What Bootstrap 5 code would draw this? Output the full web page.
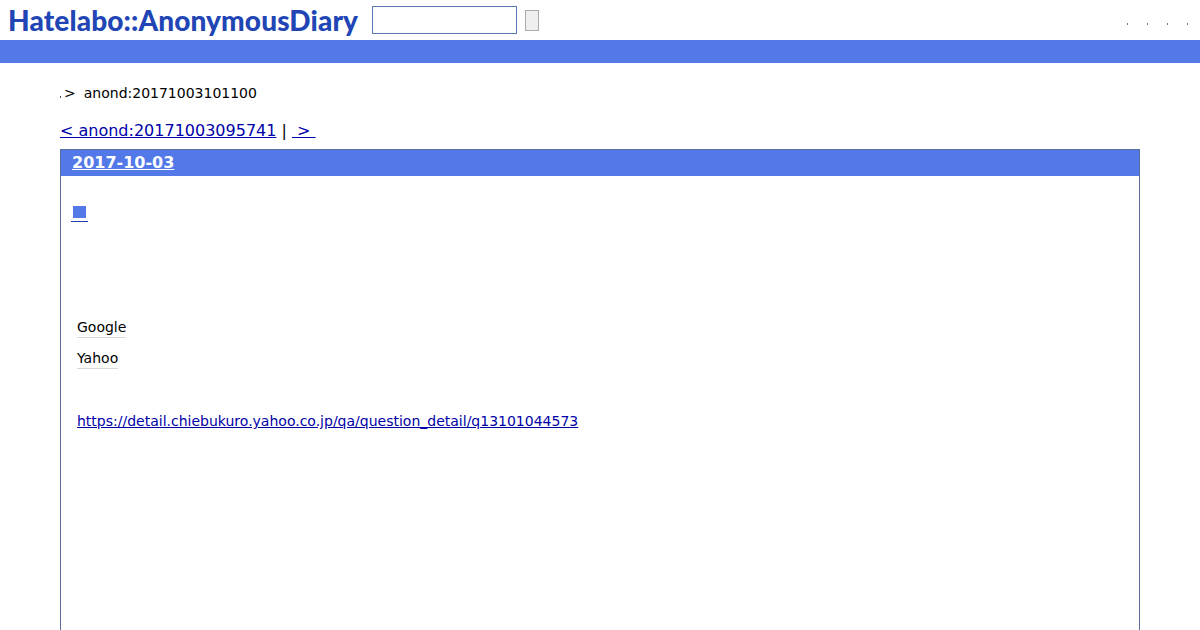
<!DOCTYPE html>
<html lang="ja">
<head>
<meta charset="utf-8">
<title>anond:20171003101100</title>
<link href="https://cdn.jsdelivr.net/npm/bootstrap@5.3.0/dist/css/bootstrap.min.css" rel="stylesheet">
<style>
html,body{height:630px;overflow:hidden}
body{font-family:"DejaVu Sans",sans-serif;font-size:14px;color:#000;background:#fff;line-height:normal}
a{color:#0000a8}
.top-strip{height:40px;padding-left:8px;padding-right:12px}
.site-logo{font-family:"Lato",sans-serif;font-weight:900;font-size:28px;color:#2145b5;line-height:40px;text-decoration:none;letter-spacing:.13px;white-space:nowrap}
.search-box{width:145px;height:28px;border:1px solid #5a78b4;background:#fff;margin-left:14px;padding:0}
.search-go{width:14px;height:21px;border:1px solid #aaa;background:#efefef;margin-left:8px;padding:0}
.tiny-links{gap:19px;margin-top:8px}
.tiny-links span{width:1px;height:2px;background:#777}
.blue-bar{height:23px;background:#5279e7}
.page-main{padding:0 60px}
.crumb{padding-top:22px;height:58px;line-height:17px;color:#000}
.crumb-dot{width:1px;height:2px;background:#555;margin-top:11px;margin-right:3px}
.crumb-gt{margin-right:8px}
.pager{font-size:16px;line-height:19px;height:19px}
.day-box{border:1px solid #5a6f9c;border-bottom:0;margin-top:9px;height:500px}
.day-head{background:#5279e7;height:26px;padding-left:11px;font-size:16px;font-weight:700;line-height:25px}
.day-head a{color:#fff}
.day-body{padding:0 16px}
.square-link{display:block;width:15px;height:15px;margin:29px 0 0 -6px;padding:1px 0 0 2px;border-bottom:1px solid #1c3fb0;box-sizing:content-box}
.square-glyph{display:block;width:13px;height:12px;background:#5279e7}
.tag-word{display:inline-block;line-height:17px;border-bottom:1px solid #d8d8d8;padding-bottom:1px}
.word-a{margin-top:97px}
.word-b{margin-top:12px}
.ext-url{margin-top:44px;line-height:17px}
</style>
</head>
<body>
<header class="top-strip d-flex align-items-center">
  <a class="site-logo" href="#">Hatelabo::AnonymousDiary</a>
  <input class="search-box" type="text" aria-label="search">
  <button class="search-go" type="button" aria-label="go"></button>
  <div class="tiny-links d-flex ms-auto"><span></span><span></span><span></span><span></span></div>
</header>
<div class="blue-bar"></div>
<main class="page-main">
  <div class="crumb d-flex align-items-start">
    <span class="crumb-dot"></span><span class="crumb-gt">&gt;</span><span>anond:20171003101100</span>
  </div>
  <div class="pager"><a href="#">&lt; anond:20171003095741</a> | <a href="#">&nbsp;&gt;&nbsp;</a></div>
  <section class="day-box">
    <div class="day-head"><a href="#">2017-10-03</a></div>
    <div class="day-body">
      <a class="square-link" href="#" aria-label="entry"><span class="square-glyph"></span></a>
      <div class="word-a"><span class="tag-word">Google</span></div>
      <div class="word-b"><span class="tag-word">Yahoo</span></div>
      <div class="ext-url"><a href="#">https://detail.chiebukuro.yahoo.co.jp/qa/question_detail/q13101044573</a></div>
    </div>
  </section>
</main>
<script src="https://cdn.jsdelivr.net/npm/bootstrap@5.3.0/dist/js/bootstrap.bundle.min.js"></script>
</body>
</html>
